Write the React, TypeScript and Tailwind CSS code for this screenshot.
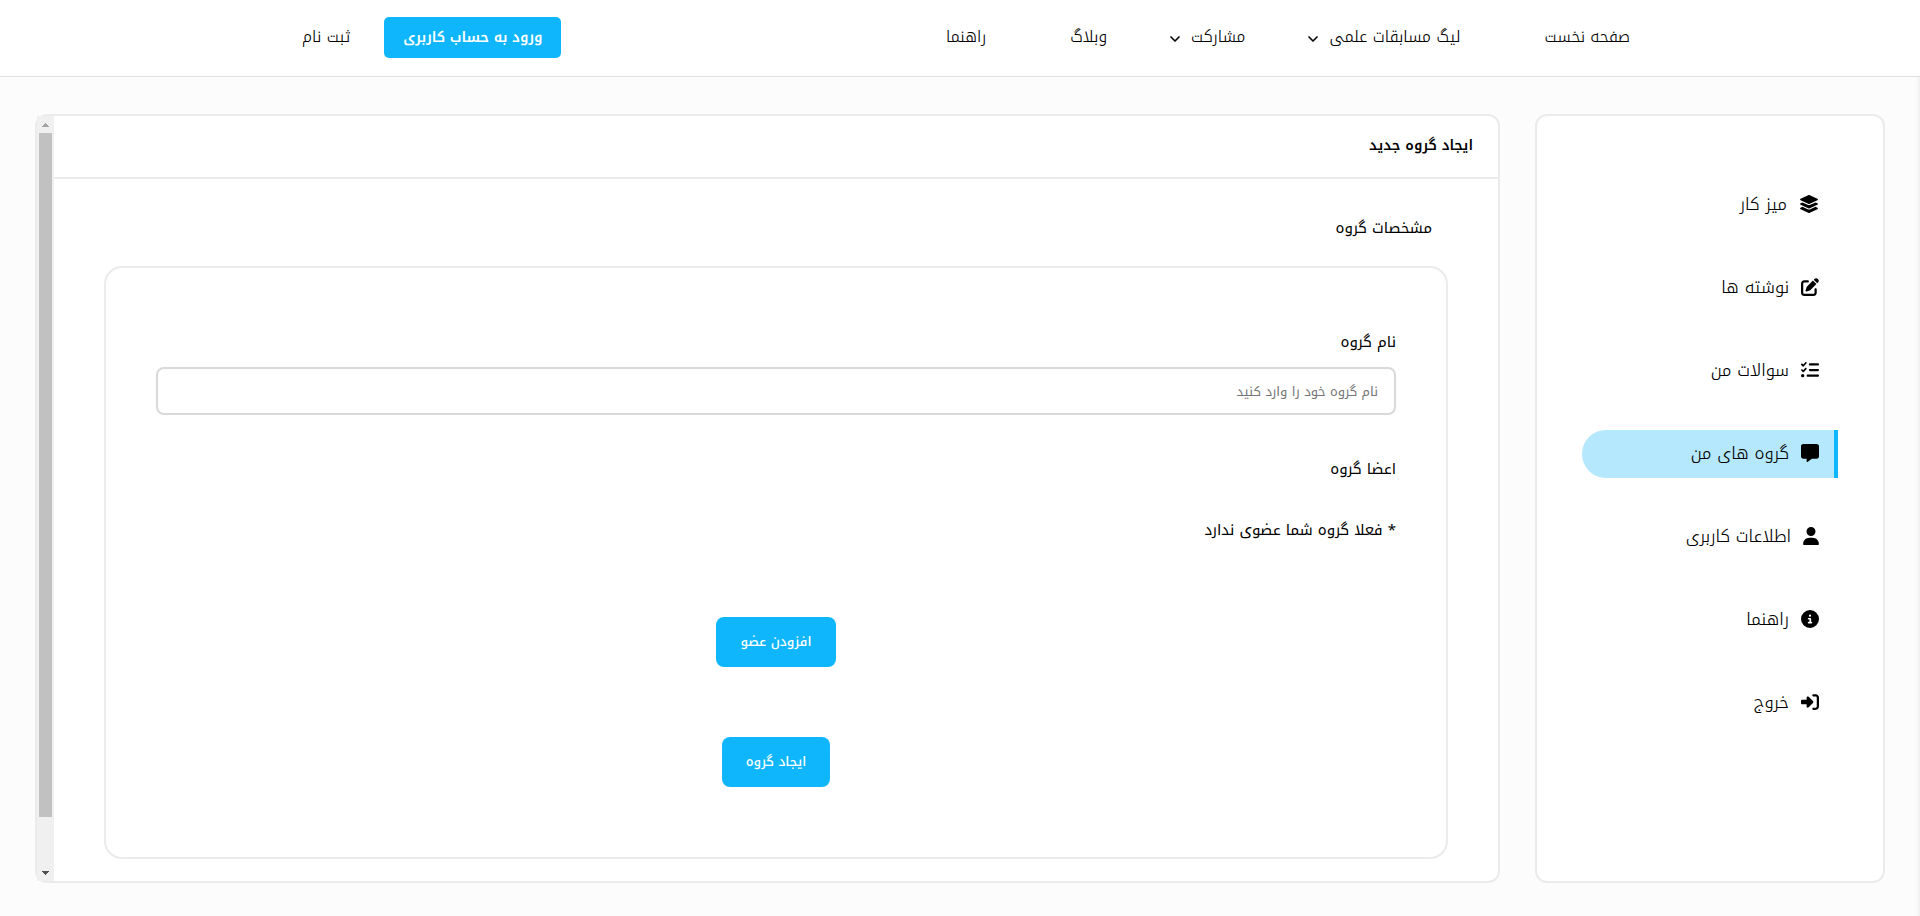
import { useState } from 'react'
import {
  FaLayerGroup,
  FaPenToSquare,
  FaListCheck,
  FaMessage,
  FaUser,
  FaCircleInfo,
  FaRightToBracket,
} from 'react-icons/fa6'
import { ChevronDown } from 'lucide-react'

interface NavItem {
  title: string
  hasMenu?: boolean
}

interface SideItem {
  title: string
  icon: React.ReactNode
  active?: boolean
}

const navItems: NavItem[] = [
  { title: 'صفحه نخست' },
  { title: 'لیگ مسابقات علمی', hasMenu: true },
  { title: 'مشارکت', hasMenu: true },
  { title: 'وبلاگ' },
  { title: 'راهنما' },
]

const sideItems: SideItem[] = [
  { title: 'میز کار', icon: <FaLayerGroup className="text-xl" /> },
  { title: 'نوشته ها', icon: <FaPenToSquare /> },
  { title: 'سوالات من', icon: <FaListCheck /> },
  { title: 'گروه های من', icon: <FaMessage />, active: true },
  { title: 'اطلاعات کاربری', icon: <FaUser className="-mx-px" /> },
  { title: 'راهنما', icon: <FaCircleInfo /> },
  { title: 'خروج', icon: <FaRightToBracket /> },
]

function Header() {
  return (
    <header className="flex h-[77px] justify-between border-b border-[#dfdfdf] bg-white pr-[290px] pl-[302px] text-base leading-6 font-light text-black">
      <nav className="pt-[25px]">
        <ul className="flex gap-15">
          {navItems.map((item) => (
            <li key={item.title}>
              <a href="#" className="flex items-center gap-2">
                <span className={item.hasMenu ? '' : 'pl-6'}>{item.title}</span>
                {item.hasMenu && <ChevronDown className="mt-1 h-4 w-4" strokeWidth={2.5} />}
              </a>
            </li>
          ))}
        </ul>
      </nav>
      <div className="flex items-start gap-[34px] pt-[17px]">
        <a
          href="#"
          className="flex h-[41px] w-[177px] items-center justify-center rounded-[5px] bg-[#10b6fb] text-sm font-semibold text-white"
        >
          ورود به حساب کاربری
        </a>
        <a href="#" className="pt-2">
          ثبت نام
        </a>
      </div>
    </header>
  )
}

function Sidebar() {
  return (
    <aside className="w-[350px] shrink-0 rounded-xl border-2 border-[#ebebeb] bg-white px-[45px] pt-[65px]">
      <ul className="flex flex-col gap-[35px]">
        {sideItems.map((item) => (
          <li key={item.title}>
            <a
              href="#"
              className={
                item.active
                  ? 'flex h-12 items-center gap-3 rounded-l-full border-r-4 border-[#10b6fb] bg-[#b5e8fc] pr-[15px] pb-0.5'
                  : 'flex h-12 items-center gap-3 border-r-4 border-transparent pr-[15px] pb-0.5'
              }
            >
              <span className="text-lg">{item.icon}</span>
              <span className="text-[17px] leading-6 font-light">{item.title}</span>
            </a>
          </li>
        ))}
      </ul>
    </aside>
  )
}

function ScrollBar() {
  return (
    <div className="flex w-[17px] shrink-0 flex-col items-center bg-[#f0f0f0]" aria-hidden="true">
      <div className="flex h-[17px] items-center">
        <svg width="7" height="4" viewBox="0 0 7 4" fill="#a3a3a3">
          <path d="M3 0h1v1h1v1h1v1h1v1H0V3h1V2h1V1h1z" />
        </svg>
      </div>
      <div className="flex w-[13px] flex-1 flex-col">
        <div className="grow-[684] bg-[#c1c1c1]" />
        <div className="grow-[47]" />
      </div>
      <div className="flex h-[17px] items-center">
        <svg width="7" height="4" viewBox="0 0 7 4" fill="#505050">
          <path d="M3 4h1V3h1V2h1V1h1V0H0v1h1v1h1v1h1z" />
        </svg>
      </div>
    </div>
  )
}

function GroupForm() {
  const [name, setName] = useState('')

  return (
    <form className="flex flex-col rounded-[18px] border-2 border-[#ebebeb] px-[50px] pt-[62px] pb-[70px]">
      <label htmlFor="group-name">نام گروه</label>
      <input
        id="group-name"
        type="text"
        value={name}
        onChange={(e) => setName(e.target.value)}
        placeholder="نام گروه خود را وارد کنید"
        className="mt-[13px] h-12 w-full rounded-lg border-2 border-[#d9d9d9] px-4 text-[13px] placeholder:text-[#757575]"
      />
      <h3 className="mt-[42px]">اعضا گروه</h3>
      <p className="mt-[37px]">* فعلا گروه شما عضوی ندارد</p>
      <button
        type="button"
        className="mt-[75px] h-[50px] w-[120px] self-center rounded-lg bg-[#10b6fb] text-[13px] font-medium text-white"
      >
        افزودن عضو
      </button>
      <button
        type="submit"
        className="mt-[70px] h-[50px] w-[108px] self-center rounded-lg bg-[#10b6fb] text-[13px] font-medium text-white"
      >
        ایجاد گروه
      </button>
    </form>
  )
}

export default function App() {
  return (
    <div
      dir="rtl"
      className="min-h-screen bg-[#fcfcfc] font-['Noto_Kufi_Arabic','Noto_Sans',sans-serif] text-[15px] leading-6 text-black"
    >
      <Header />
      <main className="flex gap-[35px] px-[35px] pt-[37px] pb-[33px] shadow-[inset_-5px_0_4px_-4px_rgba(0,0,0,0.08)]">
        <Sidebar />
        <section className="flex min-w-0 flex-1 rounded-xl border-2 border-[#ebebeb] bg-white">
          <div className="flex-1">
            <h1 className="border-b-2 border-[#ebebeb] px-[25px] pt-[18px] pb-[19px] text-sm leading-6 font-semibold">
              ایجاد گروه جدید
            </h1>
            <div className="px-[50px] pt-[37px] pb-[22px]">
              <h2 className="mb-[26px] px-4">مشخصات گروه</h2>
              <GroupForm />
            </div>
          </div>
          <ScrollBar />
        </section>
      </main>
    </div>
  )
}
